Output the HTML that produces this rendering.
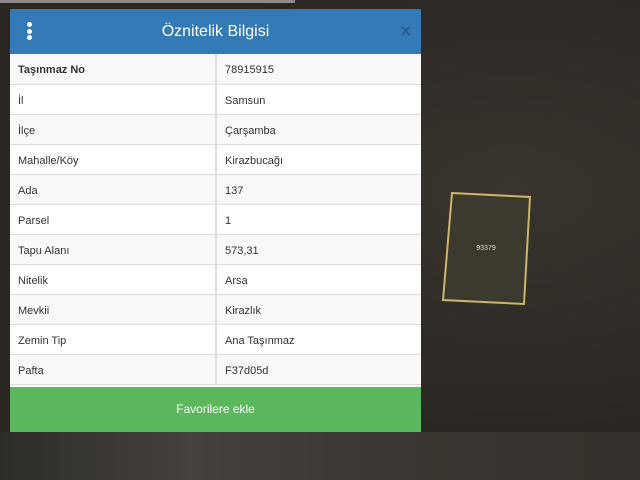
<!DOCTYPE html>
<html><head><meta charset="utf-8"><style>
body{margin:0;width:640px;height:480px;overflow:hidden;background:#34302b;font-family:"Liberation Sans",sans-serif;position:relative}
.bg{position:absolute;inset:0;background:radial-gradient(ellipse at 80% 40%,#3a342e,#2a2622 60%),#2e2a26}
.bot{position:absolute;left:0;top:432px;width:640px;height:48px;background:linear-gradient(90deg,#2e2c29,#45423d 30%,#3a3732 60%,#34302b)}
.strip{position:absolute;left:0;top:0;width:295px;height:3px;background:#8a8a8a}
.panel{position:absolute;left:10px;top:9px;width:411px;height:423px;background:#fff}
.hd{height:45px;background:#337ab7;color:#fff;font-size:16px;text-align:center;line-height:45px;position:relative}
.dots{position:absolute;left:17px;top:13px;width:5px}
.dots i{display:block;width:5px;height:5px;border-radius:50%;background:#fff;margin-bottom:1.5px}
.x{position:absolute;right:10px;top:0;color:#2a5f8f;font-size:18px;font-weight:bold}
table{border-collapse:collapse;width:100%;font-size:11px;color:#333;table-layout:fixed}
td{border-bottom:1px solid #ddd;padding:4px 0 0 8px;line-height:25px;box-sizing:border-box;height:30px}
td:first-child{width:206px;border-right:2px solid #ddd}
tr:nth-child(odd) td{background:#f9f9f9}
.btn{position:absolute;left:0;top:378px;width:411px;height:45px;background:#5cb85c;color:#fff;font-size:12px;text-align:center;line-height:45px}
</style></head><body>
<div class="bg"></div><div class="bot"></div><div class="strip"></div>
<svg style="position:absolute;left:0;top:0" width="640" height="480"><polygon points="452,193 530,197 524,304 443,300" fill="#3c3a2e" stroke="#c8b868" stroke-width="2"/><text x="486" y="250" font-size="7" fill="#ddd" text-anchor="middle" font-family="Liberation Sans">93379</text></svg>
<div class="panel">
<div class="hd"><div class="dots"><i></i><i></i><i></i></div>Öznitelik Bilgisi<span class="x">×</span></div>
<table>
<tr><td><b>Taşınmaz No</b></td><td>78915915</td></tr>
<tr><td>İl</td><td>Samsun</td></tr>
<tr><td>İlçe</td><td>Çarşamba</td></tr>
<tr><td>Mahalle/Köy</td><td>Kirazbucağı</td></tr>
<tr><td>Ada</td><td>137</td></tr>
<tr><td>Parsel</td><td>1</td></tr>
<tr><td>Tapu Alanı</td><td>573,31</td></tr>
<tr><td>Nitelik</td><td>Arsa</td></tr>
<tr><td>Mevkii</td><td>Kirazlık</td></tr>
<tr><td>Zemin Tip</td><td>Ana Taşınmaz</td></tr>
<tr><td>Pafta</td><td>F37d05d</td></tr>
</table>
<div class="btn">Favorilere ekle</div>
</div>
</body></html>
